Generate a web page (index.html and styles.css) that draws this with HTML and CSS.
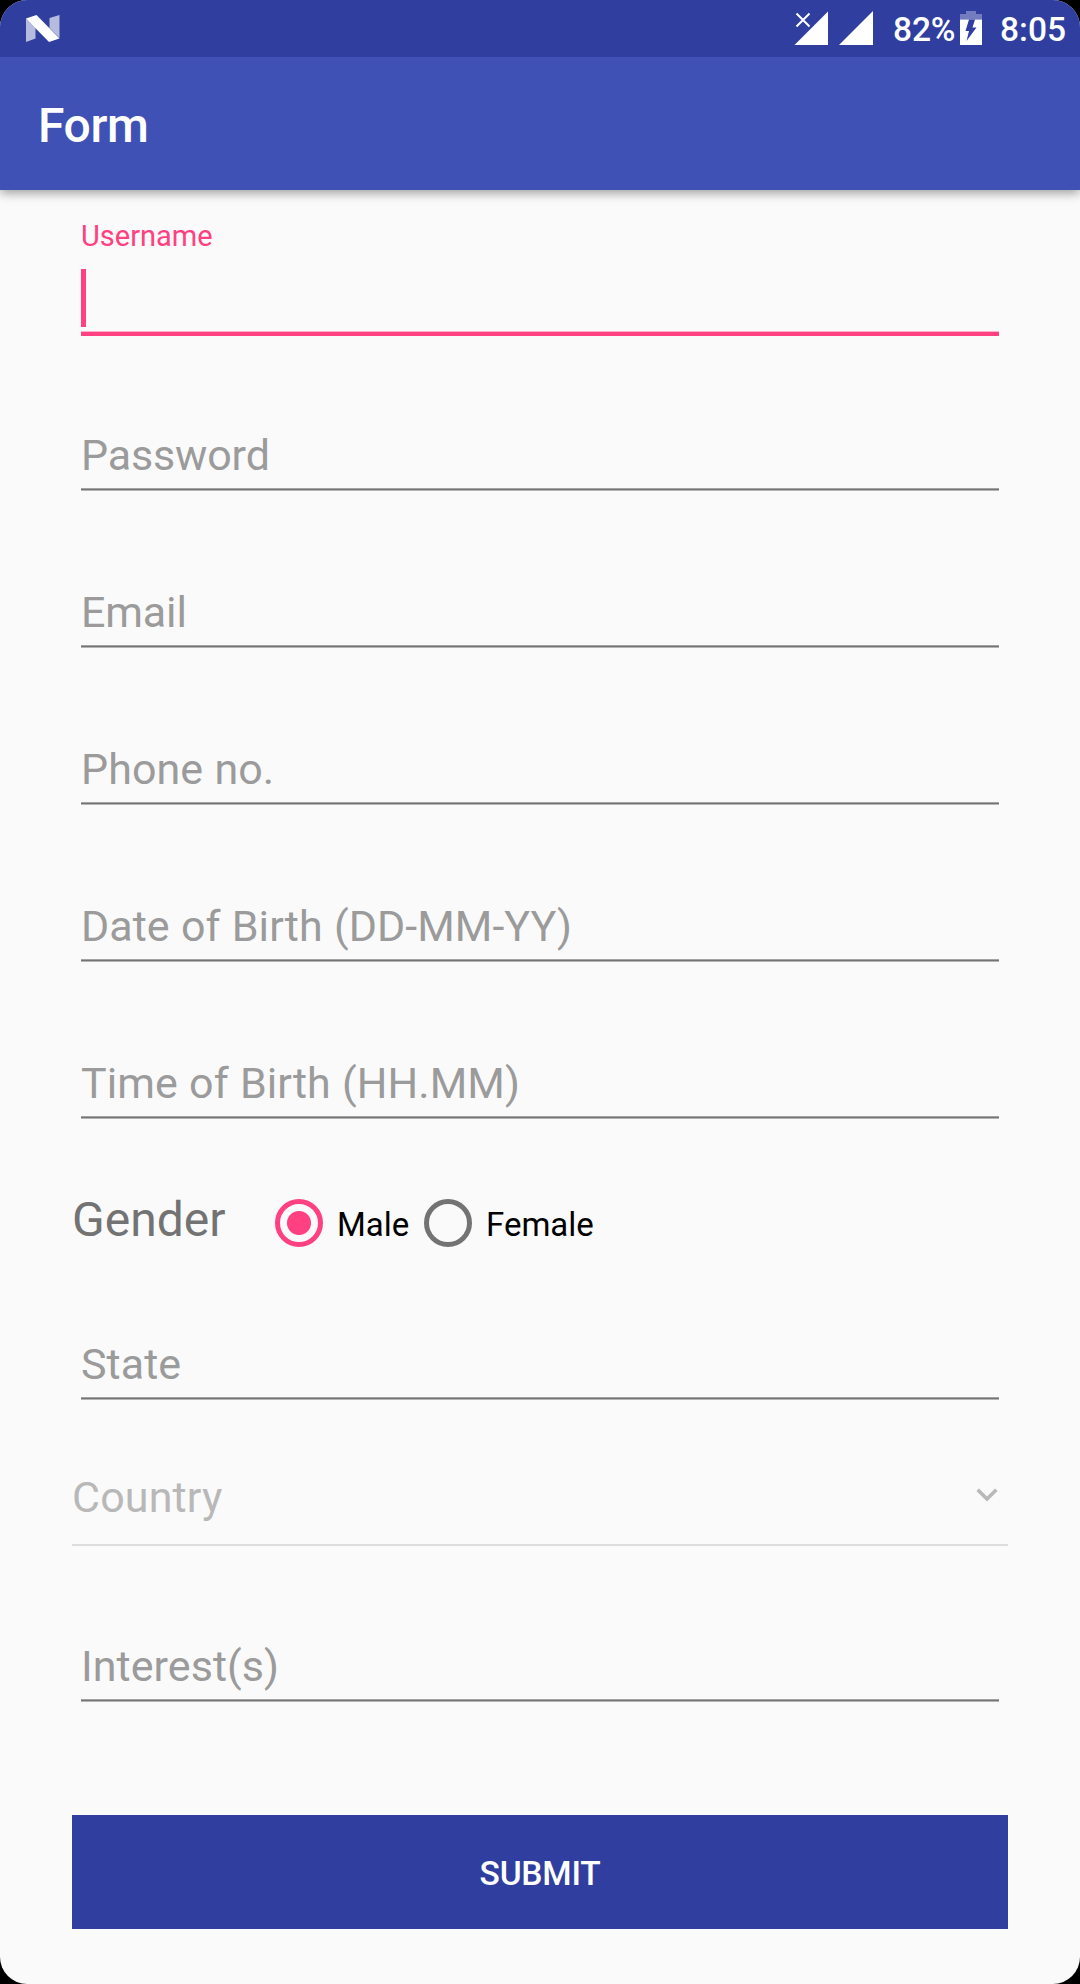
FILE: index.html
```html
<!DOCTYPE html>
<html lang="en">
<head>
<meta charset="utf-8">
<title>Form</title>
<link rel="stylesheet" href="styles.css">
</head>
<body>
<div class="screen">
  <header class="status">
    <svg class="logo" width="36" height="30" viewBox="0 0 36 30">
      <path d="M1 4.500L10.500 14V24.500L1 28zM24.500 4L34.500 1V24L24.500 14z" fill="#fff" fill-opacity=".65"/>
      <path d="M1 4.500L11.500 1L34.500 24.500L24 28z" fill="#fff"/>
    </svg>
    <div class="indicators">
      <svg class="signal-off" width="35" height="34" viewBox="0 0 35 34">
        <path d="M0.500 34L34 0.500V34z" fill="#fff"/>
        <path d="M2.500 2.500L15.500 15.500M15.500 2.500L2.500 15.500" stroke="#303f9f" stroke-width="5"/>
        <path d="M2.500 2.500L15.500 15.500M15.500 2.500L2.500 15.500" stroke="#fff" stroke-width="2"/>
      </svg>
      <svg class="signal" width="34" height="34" viewBox="0 0 34 34"><path d="M0 34L34 0V34z" fill="#fff"/></svg>
      <span class="percent">82%</span>
      <svg class="battery" width="22" height="34" viewBox="0 0 22 34">
        <path d="M0 3H6V0H16V3H22V8.500H0z" fill="#fff" fill-opacity=".32"/>
        <path d="M0 8.500H22V34H0z" fill="#fff"/>
        <path d="M9 8.500H15L12.500 16.500H16.500L6.500 30L9 20H5.500z" fill="#303f9f"/>
      </svg>
      <span class="clock">8:05</span>
    </div>
  </header>
  <div class="appbar"><h1 class="title">Form</h1></div>
  <main class="form">
    <div class="field focused">
      <span class="label">Username</span>
      <span class="caret"></span>
      <span class="line"></span>
    </div>
    <div class="field second"><span class="hint tight">Password</span><span class="line"></span></div>
    <div class="field"><span class="hint tight">Email</span><span class="line"></span></div>
    <div class="field"><span class="hint">Phone no.</span><span class="line"></span></div>
    <div class="field"><span class="hint">Date of Birth (DD-MM-YY)</span><span class="line"></span></div>
    <div class="field"><span class="hint">Time of Birth (HH.MM)</span><span class="line"></span></div>
    <div class="gender">
      <span class="gender-label">Gender</span>
      <span class="radio checked"></span><span class="option male">Male</span>
      <span class="radio"></span><span class="option">Female</span>
    </div>
    <div class="field state"><span class="hint">State</span><span class="line"></span></div>
    <div class="country">
      <span class="country-hint">Country</span>
      <svg width="22" height="14" viewBox="0 0 22 14"><path d="M1.700 1.700L11 11L20.300 1.700" fill="none" stroke="#b8b8b8" stroke-width="3.600"/></svg>
    </div>
    <div class="field interests"><span class="hint">Interest(s)</span><span class="line"></span></div>
    <div class="submit">SUBMIT</div>
  </main>
</div>
</body>
</html>
```
FILE: styles.css
```css
* { box-sizing: border-box; }
body { margin: 0; background: #000; font-family: Roboto, sans-serif; }
.screen {
  height: 1984px;
  border-radius: 27px;
  overflow: hidden;
  background: #fafafa;
  display: flex;
  flex-direction: column;
}
.status {
  height: 57px;
  background: #303f9f;
  display: flex;
  justify-content: space-between;
  align-items: flex-start;
  padding: 0 14px 0 25px;
  color: #fff;
}
.logo { margin-top: 14px; }
.indicators { display: flex; align-items: flex-start; }
.indicators svg { margin-top: 11px; }
.signal { margin-left: 10px; }
.percent, .clock {
  font-size: 33.500px;
  font-weight: 500;
  line-height: 40px;
  margin-top: 10px;
}
.percent { margin-left: 20px; width: 67px; white-space: nowrap; letter-spacing: -.2px; }
.clock { margin-left: 18px; }
.appbar {
  height: 133px;
  background: #3f51b5;
  box-shadow: 0 3px 10px rgba(0, 0, 0, .38);
  clip-path: inset(0 0 -20px 0);
  padding: 41px 38px 0;
}
.title {
  margin: 0;
  color: #fff;
  font-size: 48px;
  font-weight: 500;
  line-height: 56px;
  letter-spacing: -.4px;
}
.form {
  flex: 1;
  display: flex;
  flex-direction: column;
  padding: 0 72px;
}
.field {
  height: 157px;
  margin: 0 9px;
  display: flex;
  flex-direction: column;
  justify-content: flex-end;
}
.hint {
  font-size: 43px;
  line-height: 50px;
  margin-bottom: 8px;
  color: #9b9b9b;
  letter-spacing: .06px;
  word-spacing: .500px;
}
.tight { letter-spacing: -.15px; }
.line {
  height: 3px;
  background: linear-gradient(#a3a3a3 1px, #737373 1px 2px, #b5b5b5 2px);
}
.focused { height: 146px; }
.focused .label {
  color: #ff4081;
  font-size: 29px;
  line-height: 34px;
  margin-bottom: 16px;
}
.focused .caret { width: 5px; height: 58px; background: #ff4081; margin-bottom: 4px; }
.focused .line { height: 5px; background: linear-gradient(#fdb0ca 1px, #ff4081 1px); }
.second { height: 155px; }
.gender {
  height: 122px;
  padding-top: 61px;
  display: flex;
  align-items: flex-end;
}
.gender-label {
  font-size: 48px;
  line-height: 56px;
  width: 203px;
  color: #737373;
  margin-bottom: -7px;
}
.radio {
  width: 48px;
  height: 48px;
  border: 5px solid #737373;
  border-radius: 50%;
  margin-bottom: -6px;
}
.checked {
  border-color: #ff4081;
  background: radial-gradient(circle, #ff4081 11.500px, transparent 12.500px);
}
.option { font-size: 33px; line-height: 38px; margin: 0 0 -3px 14px; color: #000; }
.male { width: 87px; }
.state { height: 159px; }
.country {
  height: 146px;
  border-bottom: 2px solid #ddd;
  display: flex;
  justify-content: space-between;
  align-items: flex-end;
  padding: 0 10px 42px 0;
}
.country-hint {
  font-size: 43px;
  line-height: 50px;
  letter-spacing: .15px;
  color: #b8b8b8;
  margin-bottom: -20px;
}
.interests { height: 156px; }
.submit {
  height: 114px;
  margin-top: 113px;
  background: #303f9f;
  color: #fff;
  font-size: 33.500px;
  font-weight: 500;
  letter-spacing: -.2px;
  line-height: 117px;
  text-align: center;
}
```
